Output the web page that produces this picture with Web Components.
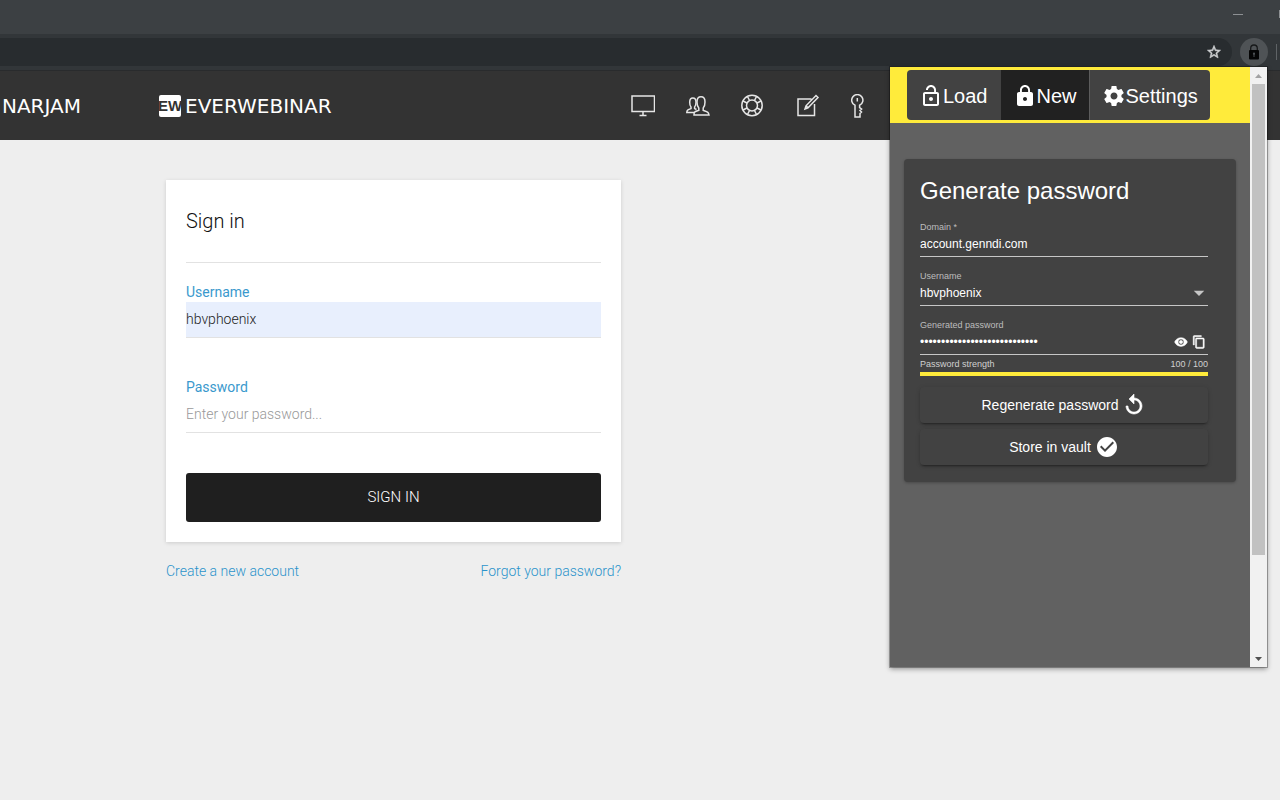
<!DOCTYPE html>
<html lang="en">
<head>
<meta charset="utf-8">
<title>Sign in</title>
<style>
  html { height: 100%; }
  body { margin: 0; min-height: 100%; background: #eeeeee; font-family: Roboto, "Liberation Sans", sans-serif; }
</style>
</head>
<body>
<app-window></app-window>

<script>
const define = (name, markup, setup) => {
  const template = document.createElement('template');
  template.innerHTML = markup;
  customElements.define(name, class extends HTMLElement {
    constructor() {
      super();
      this.attachShadow({ mode: 'open' }).append(template.content.cloneNode(true));
    }
    connectedCallback() {
      if (setup) setup(this, this.shadowRoot);
    }
  });
};

/* Filled icons on a 24-unit grid, sized through --size and thickened through --weight */
const glyphs = {
  'lock-open': 'M12 17c1.1 0 2-.9 2-2s-.9-2-2-2-2 .9-2 2 .9 2 2 2zm6-9h-1V6c0-2.76-2.24-5-5-5S7 3.24 7 6h1.9c0-1.71 1.39-3.1 3.1-3.1 1.71 0 3.1 1.39 3.1 3.1v2H6c-1.1 0-2 .9-2 2v10c0 1.1.9 2 2 2h12c1.1 0 2-.9 2-2V10c0-1.1-.9-2-2-2zm0 12H6V10h12v10z',
  'lock': 'M18 8h-1V6c0-2.76-2.24-5-5-5S7 3.24 7 6v2H6c-1.1 0-2 .9-2 2v10c0 1.1.9 2 2 2h12c1.1 0 2-.9 2-2V10c0-1.1-.9-2-2-2zm-6 9c-1.1 0-2-.9-2-2s.9-2 2-2 2 .9 2 2-.9 2-2 2zm3.1-9H8.9V6c0-1.71 1.39-3.1 3.1-3.1 1.71 0 3.1 1.39 3.1 3.1v2z',
  'settings': 'M19.43 12.98c.04-.32.07-.64.07-.98s-.03-.66-.07-.98l2.11-1.65c.19-.15.24-.42.12-.64l-2-3.46c-.12-.22-.39-.3-.61-.22l-2.49 1c-.52-.4-1.08-.73-1.69-.98l-.38-2.65C14.46 2.18 14.25 2 14 2h-4c-.25 0-.46.18-.49.42l-.38 2.65c-.61.25-1.17.59-1.69.98l-2.49-1c-.23-.09-.49 0-.61.22l-2 3.46c-.13.22-.07.49.12.64l2.11 1.65c-.04.32-.07.65-.07.98s.03.66.07.98l-2.11 1.65c-.19.15-.24.42-.12.64l2 3.46c.12.22.39.3.61.22l2.49-1c.52.4 1.08.73 1.69.98l.38 2.65c.03.24.24.42.49.42h4c.25 0 .46-.18.49-.42l.38-2.65c.61-.25 1.17-.59 1.69-.98l2.49 1c.23.09.49 0 .61-.22l2-3.46c.12-.22.07-.49-.12-.64l-2.11-1.65zM12 15.5c-1.93 0-3.5-1.57-3.5-3.5s1.57-3.5 3.5-3.5 3.5 1.57 3.5 3.5-1.57 3.5-3.5 3.5z',
  'eye': 'M12 4.5C7 4.5 2.73 7.61 1 12c1.73 4.39 6 7.5 11 7.5s9.27-3.11 11-7.5c-1.73-4.39-6-7.5-11-7.5zM12 17c-2.76 0-5-2.24-5-5s2.24-5 5-5 5 2.24 5 5-2.24 5-5 5zm0-8c-1.66 0-3 1.34-3 3s1.34 3 3 3 3-1.34 3-3-1.34-3-3-3z',
  'copy': 'M16 1H4c-1.1 0-2 .9-2 2v14h2V3h12V1zm3 4H8c-1.1 0-2 .9-2 2v14c0 1.1.9 2 2 2h11c1.1 0 2-.9 2-2V7c0-1.1-.9-2-2-2zm0 16H8V7h11v14z',
  'replay': 'M12 5V1L7 6l5 5V7c3.31 0 6 2.69 6 6s-2.69 6-6 6-6-2.69-6-6H4c0 4.42 3.58 8 8 8s8-3.58 8-8-3.58-8-8-8z',
  'check': 'M12 2C6.48 2 2 6.48 2 12s4.48 10 10 10 10-4.48 10-10S17.52 2 12 2zm-2 15l-5-5 1.41-1.41L10 14.17l7.59-7.59L19 8l-9 9z',
  'star': 'M22 9.24l-7.19-.62L12 2 9.19 8.63 2 9.24l5.46 4.73L5.82 21 12 17.27 18.18 21l-1.63-7.03L22 9.24zM12 15.4l-3.76 2.27 1-4.28-3.32-2.88 4.38-.38L12 6.1l1.71 4.04 4.38.38-3.32 2.88 1 4.28L12 15.4z',
  'down': 'M5 9l7 7 7-7z'
};

define('fill-icon', `
  <style>
    :host { display: block; flex: none; width: var(--size, 24px); height: var(--size, 24px); }
    svg { display: block; width: 100%; height: 100%; overflow: visible; fill: currentColor; stroke: currentColor; stroke-width: var(--weight, 0); }
  </style>
  <svg viewBox="0 0 24 24" aria-hidden="true"><path/></svg>`,
  (host, root) => root.querySelector('path').setAttribute('d', glyphs[host.getAttribute('name')]));

define('browser-bar', `
  <style>
    :host { display: block; color: #d0d2d4; }
    .tabs { display: flex; justify-content: flex-end; height: 34px; background: #3c4043; }
    .tabs button { width: 46px; height: 28px; padding: 0; border: 0; background: none; color: #8d9093; display: grid; place-items: center; }
    .tabs button:last-child { width: 19px; overflow: hidden; justify-items: end; }
    .tools { display: flex; align-items: center; gap: 8px; height: 36px; background: #323639; }
    .address { flex: 1; display: flex; align-items: center; justify-content: flex-end; height: 28px; padding-right: 10px; background: #282c2f; border-radius: 0 14px 14px 0; }
    .address button { padding: 0; border: 0; background: none; color: inherit; --size: 16px; --weight: 0.8; }
    .ext { width: 28px; height: 28px; padding: 0; border: 0; border-radius: 50%; background: #4f5356; display: grid; place-items: center; }
    .rule { width: 1px; height: 16px; margin-right: 3px; background: #5f6366; }
  </style>
  <div class="tabs">
    <button aria-label="Minimise"><svg width="10" height="1"><path d="M0 .5h10" stroke="currentColor"/></svg></button>
    <button aria-label="Maximise"><svg width="1" height="8"><path d="M.5 0v8" stroke="currentColor"/></svg></button>
  </div>
  <div class="tools">
    <div class="address"><button aria-label="Bookmark"><fill-icon name="star"></fill-icon></button></div>
    <button class="ext" aria-label="Password extension">
      <svg width="12" height="16" viewBox="0 0 12 16">
        <path d="M2.700 6V4.300a3.300 3.300 0 0 1 6.600 0V6" fill="none" stroke="#17191a" stroke-width="1.300"/>
        <rect x="1" y="6" width="10" height="9.500" rx="1" fill="#050505"/>
        <circle cx="6" cy="9.700" r="1.100" fill="#4f5356"/><path d="M5.500 10h1v3h-1z" fill="#4f5356"/>
      </svg>
    </button>
    <span class="rule"></span>
  </div>`);

define('brand-logo', `
  <style>
    :host { display: block; }
    a { display: flex; align-items: center; gap: 4px; color: #fff; text-decoration: none; font: 20px/22px "DejaVu Sans", sans-serif; }
    .mark { display: flex; align-items: center; justify-content: center; width: 22px; height: 22px; overflow: hidden; border-radius: 2px; background: #fff; color: #333; font: bold 15px/22px "Liberation Sans", sans-serif; }
    :host(:not([mark])) .mark { display: none; }
  </style>
  <a href="#"><span class="mark"></span><slot></slot></a>`,
  (host, root) => { root.querySelector('.mark').textContent = host.getAttribute('mark') || ''; });

define('site-header', `
  <style>
    :host { display: flex; align-items: center; box-sizing: border-box; height: 70px; border-top: 1px solid #292b2d; background: #333; }
    .first { width: 81px; display: flex; justify-content: flex-end; }
    .second { width: 472px; margin-left: 78px; }
    nav { display: flex; align-items: center; gap: 31px; }
    nav a { display: block; color: #e6e6e6; }
    svg { display: block; fill: none; stroke: currentColor; stroke-width: 1.500; }
  </style>
  <brand-logo class="first">NARJAM</brand-logo>
  <brand-logo class="second" mark="EW">EVERWEBINAR</brand-logo>
  <nav>
    <a href="#" aria-label="Webinars"><svg width="24" height="24" viewBox="0 0 24 24"><path d="M1 2h22.500v15.500H1zM12 17.500v4M8.500 21.500h7"/></svg></a>
    <a href="#" aria-label="Members"><svg width="24" height="24" viewBox="0 0 24 24">
      <path d="M8 21c0-3.300.2-3 4.800-4.600v-2.400c-1.600-1.500-1.800-3.200-1.800-6 0-3.200 1.500-5.200 4-5.200s4 2 4 5.200c0 2.800-.2 4.500-1.800 6v2.400c4.600 1.600 5.300 1.600 5.800 4.600z"/>
      <path d="M8 18.500H.8c.2-2.500.7-2.500 4.200-3.900v-1.600c-1.300-1.200-1.300-2.600-1.300-4.700 0-2.500 1.200-4.200 3.200-4.200 2 0 3.100 1.600 3.100 4.200 0 2-.2 3.500-1.400 4.700v1.600l1.900.9"/></svg></a>
    <a href="#" aria-label="Support"><svg width="24" height="24" viewBox="0 0 24 24">
      <circle cx="11" cy="11.500" r="10.200"/><circle cx="11" cy="11.500" r="5.500"/>
      <path d="M8.500 6.500L6.500 2.500M13.500 6.500L15.500 2.500M8.500 16.500L6.500 20.500M13.500 16.500L15.500 20.500M6 9L2 7M6 14L2 16M16 9L20 7M16 14L20 16"/></svg></a>
    <a href="#" aria-label="Write"><svg width="24" height="24" viewBox="0 0 24 24"><path d="M15.500 5H2v16.500h16.500V10M9 15l1-3.200L20 1.500l2 2L12 13.800zM10 11.800l2 2"/></svg></a>
    <a href="#" aria-label="Access"><svg width="13" height="24" viewBox="0 0 13 24"><path d="M4 11.300A5.600 5.600 0 1 1 8.600 11.300V13.500l2 1.500L9 16.500l1.500 1.500L9 19.500v3.500H4zM6.300 4v3.500"/></svg></a>
  </nav>`);

define('line-field', `
  <style>
    :host { display: block; height: 95px; }
    label { display: block; color: #3a99cd; font-size: 14px; line-height: 20px; }
    input { display: block; box-sizing: border-box; width: 100%; height: 36px; padding: 0 0 2px; border: 0; border-bottom: 1px solid #e2e2e2; border-radius: 0; outline: 0; background: transparent; color: #222; font: 300 14px/20px Roboto, sans-serif; }
    input::placeholder { color: #999; opacity: 1; }
    :host([filled]) input { background: #e8effd; }
  </style>
  <label for="box"></label><input id="box">`,
  (host, root) => {
    const box = root.querySelector('input');
    root.querySelector('label').textContent = host.getAttribute('label');
    box.type = host.getAttribute('type') || 'text';
    box.value = host.getAttribute('value') || '';
    box.placeholder = host.getAttribute('placeholder') || '';
  });

define('sign-in-form', `
  <style>
    :host { display: block; max-width: 455px; margin: 40px 166px; font-weight: 300; }
    form { padding: 0 20px 20px; background: #fff; box-shadow: 0 1px 4px rgba(0,0,0,.14); }
    h1 { margin: 0 0 19px; height: 82px; border-bottom: 1px solid #e2e2e2; color: #111; font-size: 20px; font-weight: 300; line-height: 82px; }
    line-field { font-weight: 400; }
    form button { display: block; width: 100%; height: 49px; margin-top: 1px; padding: 0 0 2px; border: 0; border-radius: 3px; background: #1f1f1f; color: #fff; font: 300 15px/20px Roboto, sans-serif; }
    .links { display: flex; justify-content: space-between; margin-top: 19px; font-size: 14px; line-height: 20px; }
    .links a { color: #2b93cb; text-decoration: none; }
  </style>
  <form onsubmit="return false">
    <h1>Sign in</h1>
    <line-field label="Username" value="hbvphoenix" filled></line-field>
    <line-field label="Password" type="password" placeholder="Enter your password..."></line-field>
    <button>SIGN IN</button>
  </form>
  <div class="links"><a href="#">Create a new account</a><a href="#">Forgot your password?</a></div>`);

define('tab-group', `
  <style>
    :host { display: flex; height: 56px; box-sizing: border-box; padding: 3px 17px; background: #ffeb3b; }
    div { display: flex; overflow: hidden; border-radius: 4px; background: #424242; }
    button { display: flex; align-items: center; padding: 2px 12px 0; border: 0; background: none; color: #fff; font: 20px/24px "Liberation Sans", Arial, sans-serif; }
    button + button { border-left: 1px solid #5c5c5c; }
    button[aria-selected=true] { border-color: #424242; background: #212121; }
  </style>
  <div role="tablist">
    <button role="tab"><fill-icon name="lock-open"></fill-icon>Load</button>
    <button role="tab" aria-selected="true"><fill-icon name="lock"></fill-icon>New</button>
    <button role="tab"><fill-icon name="settings"></fill-icon>Settings</button>
  </div>`);

define('vault-field', `
  <style>
    :host { display: block; height: 49px; }
    label { display: block; color: #bdbdbd; font-size: 9px; line-height: 12px; }
    .row { display: flex; align-items: flex-start; box-sizing: border-box; height: 24px; border-bottom: 1px solid #c6c6c6; }
    ::slotted(*) { flex: none; }
  </style>
  <label for="box"></label>
  <div class="row"><span class="control"></span><slot></slot></div>`,
  (host, root) => {
    const kind = host.getAttribute('kind') || 'text';
    const value = host.getAttribute('value');
    const box = document.createElement(kind === 'select' ? 'select' : 'input');
    box.id = 'box';
    if (kind === 'select') box.add(new Option(value, value, true, true));
    else { box.type = kind; box.value = value; }
    box.style.cssText = 'flex:1;min-width:0;appearance:none;height:22px;padding:0;margin:0;border:0;outline:0;background:none;color:#fff;font:12px/16px "Liberation Sans",Arial,sans-serif;';
    root.querySelector('label').textContent = host.getAttribute('label');
    root.querySelector('.control').replaceWith(box);
  });

define('vault-button', `
  <style>
    :host { display: block; }
    button { display: flex; align-items: center; justify-content: center; gap: 4px; width: 100%; height: 36px; padding: 0; border: 0; border-radius: 4px; background: #424242; color: #fff; font: 14px/20px "Liberation Sans", Arial, sans-serif; box-shadow: 0 3px 1px -2px rgba(0,0,0,.2), 0 2px 2px rgba(0,0,0,.14), 0 1px 5px rgba(0,0,0,.12); }
  </style>
  <button><slot></slot></button>`);

define('generate-card', `
  <style>
    :host { display: block; margin: 36px 14px; padding: 16px 28px 17px 16px; border-radius: 4px; background: #424242; box-shadow: 0 1px 3px rgba(0,0,0,.25); color: #fff; }
    h2 { margin: 0 0 14px; font-size: 24px; font-weight: 400; line-height: 32px; }
    .icon { display: block; padding: 0; margin: 4px 2px 0; border: 0; background: none; color: #fff; --size: 14px; --weight: 0.8; }
    .arrow { --size: 18px; margin-top: 2px; color: #c6c6c6; }
    .last { height: 36px; }
    .generated { padding-top: 3px; }
    .strength { display: flex; justify-content: space-between; margin-bottom: 2px; color: #d0d0d0; font-size: 9px; line-height: 12px; }
    .meter { height: 4px; margin-bottom: 11px; background: #ffeb3b; }
    .bold { --weight: 0.6; }
    vault-button + vault-button { margin-top: 6px; }
  </style>
  <h2>Generate password</h2>
  <vault-field label="Domain *" value="account.genndi.com"></vault-field>
  <vault-field label="Username" kind="select" value="hbvphoenix"><fill-icon class="arrow" name="down"></fill-icon></vault-field>
  <vault-field class="last" label="Generated password" kind="password" value="abcdefghijklmnopqrstuvwxyz12">
    <button class="icon" aria-label="Show password"><fill-icon name="eye"></fill-icon></button>
    <button class="icon" aria-label="Copy password"><fill-icon name="copy"></fill-icon></button>
  </vault-field>
  <div class="generated">
    <div class="strength"><span>Password strength</span><span>100 / 100</span></div>
    <div class="meter" role="meter" aria-label="Password strength" aria-valuenow="100" aria-valuemax="100"></div>
  </div>
  <vault-button>Regenerate password <fill-icon class="bold" name="replay"></fill-icon></vault-button>
  <vault-button>Store in vault <fill-icon name="check"></fill-icon></vault-button>`);

define('scroll-track', `
  <style>
    :host { display: flex; flex-direction: column; width: 17px; background: #f1f1f1; }
    button { display: grid; place-items: center; height: 17px; padding: 0; border: 0; background: none; color: #505050; }
    button:first-of-type { color: #a3a3a3; }
    .space { flex: 1; padding: 0 2px; }
    .thumb { width: 13px; height: 83.3%; background: #c1c1c1; }
  </style>
  <button aria-label="Scroll up"><svg width="7" height="4"><path d="M0 4L3.500 0 7 4z" fill="currentColor"/></svg></button>
  <div class="space"><div class="thumb"></div></div>
  <button aria-label="Scroll down"><svg width="7" height="4"><path d="M0 0h7L3.500 4z" fill="currentColor"/></svg></button>`);

define('vault-popup', `
  <style>
    :host { display: flex; width: 377px; height: 600px; background: #616161; box-shadow: 0 0 0 1px rgba(0,0,0,.28), 0 2px 5px rgba(0,0,0,.4); font-family: "Liberation Sans", Arial, sans-serif; }
    main { flex: 1; min-width: 0; }
  </style>
  <main><tab-group></tab-group><generate-card></generate-card></main>
  <scroll-track></scroll-track>`);

define('app-window', `
  <style>
    :host { display: block; position: relative; }
    vault-popup { position: absolute; top: 67px; right: 13px; }
  </style>
  <browser-bar></browser-bar>
  <site-header></site-header>
  <sign-in-form></sign-in-form>
  <vault-popup></vault-popup>`);
</script>
</body>
</html>
